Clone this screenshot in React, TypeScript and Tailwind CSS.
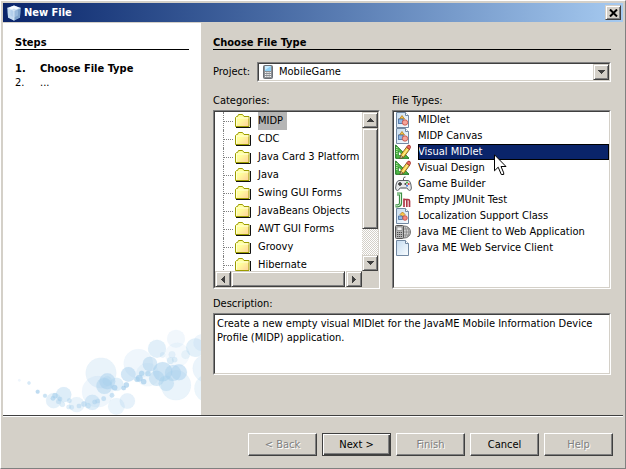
import React, { useState } from "react";

const SUNKEN =
  "border border-t-[#808080] border-l-[#808080] border-r-white border-b-white";
const SUNKEN_INNER =
  "border border-t-[#404040] border-l-[#404040] border-r-[#d4d0c8] border-b-[#d4d0c8]";
const RAISED =
  "border border-t-[#d4d0c8] border-l-[#d4d0c8] border-r-[#404040] border-b-[#404040] bg-[#d4d0c8] shadow-[inset_1px_1px_0_#fff,inset_-1px_-1px_0_#808080]";

type Direction = "up" | "down" | "left" | "right";

const ARROWS: Record<Direction, string> = {
  up: "M4 0h1v1H4zM3 1h3v1H3zM2 2h5v1H2zM1 3h7v1H1z",
  down: "M1 0h7v1H1zM2 1h5v1H2zM3 2h3v1H3zM4 3h1v1H4z",
  left: "M3 1h1v7H3zM2 2h1v5H2zM1 3h1v3H1zM0 4h1v1H0z",
  right: "M0 1h1v7H0zM1 2h1v5H1zM2 3h1v3H2zM3 4h1v1H3z",
};

function Arrow({ dir }: { dir: Direction }) {
  const vertical = dir === "up" || dir === "down";
  return (
    <svg
      width={vertical ? 9 : 4}
      height={vertical ? 4 : 9}
      fill="#404040"
      shapeRendering="crispEdges"
      aria-hidden="true"
    >
      <path d={ARROWS[dir]} />
    </svg>
  );
}

function ScrollButton({ dir }: { dir: Direction }) {
  return (
    <button
      type="button"
      tabIndex={-1}
      aria-label={`Scroll ${dir}`}
      className={`flex size-4 shrink-0 items-center justify-center ${RAISED}`}
    >
      <Arrow dir={dir} />
    </button>
  );
}

function CubeIcon() {
  return (
    <svg width="14" height="16" viewBox="0 0 14 16" aria-hidden="true">
      <path d="M7 .5 13.5 3 13 12.5 7 15.5 1 12.5.5 3z" fill="#8fb4dc" />
      <path d="M7 .5 13.5 3 7 5.5.5 3z" fill="#f4f9ff" />
      <path d="M.5 3 7 5.5v10L1 12.5z" fill="#c3daf0" />
      <path d="M13.5 3 7 5.5v10l6-3z" fill="#7fa3cb" />
      <path d="M7 3.5 11 5.5v5L7 12.500 3.500 10.500v-5z" fill="#a9c8e8" opacity=".6" />
      <path d="M7 5.500v10M.5 3 7 5.500 13.500 3" stroke="#e8f2fc" strokeWidth=".7" fill="none" />
    </svg>
  );
}

function PhoneIcon() {
  return (
    <svg width="10" height="14" viewBox="0 0 10 14" aria-hidden="true">
      <rect x=".5" y=".5" width="9" height="13" rx="1" fill="#8b8f94" stroke="#6b6f75" />
      <rect x="2" y="1" width="6" height="5" fill="#8fd0f5" />
      <path d="M2 1h6L2 5z" fill="#c9ecff" />
      <path d="M2 7.500h6M2 9.500h6M2 11.500h6" stroke="#f4f4f4" strokeDasharray="1.500 .75" />
    </svg>
  );
}

function FolderIcon() {
  return (
    <svg width="16" height="14" viewBox="0 0 16 14" aria-hidden="true">
      <defs>
        <linearGradient id="folder" x1="0" y1="0" x2="1" y2="1">
          <stop offset=".4" stopColor="#ffff9c" />
          <stop offset="1" stopColor="#ffcf9c" />
        </linearGradient>
      </defs>
      <path d="M.5 12.500v-9l1-1h1l1-2h4l1.500 2h5v10z" fill="url(#folder)" stroke="#9c9c00" />
      <path d="M1.500 11.500V4h12" stroke="#ffffd8" fill="none" />
      <path d="M1 13.500h14.500V3" stroke="#111" fill="none" />
    </svg>
  );
}

function Sheet({ children }: { children?: React.ReactNode }) {
  return (
    <svg width="16" height="16" viewBox="0 0 16 16" aria-hidden="true">
      <defs>
        <linearGradient id="sheet" x1="0" y1="0" x2="1" y2="1">
          <stop offset="0" stopColor="#c5dcf1" />
          <stop offset="1" stopColor="#fafdff" />
        </linearGradient>
      </defs>
      <path d="M1.500.5h9l3 3v12h-12z" fill="url(#sheet)" stroke="#7289a3" />
      <path d="M10.500.5v3h3" fill="#fff" stroke="#7289a3" />
      {children}
    </svg>
  );
}

function ClassIcon() {
  return (
    <Sheet>
      <path d="M7 3.500 9.500 7H4.500z" fill="#f9c64d" stroke="#b57a14" strokeWidth=".8" />
      <rect x="3.500" y="7" width="4.500" height="4.500" fill="#8fb8e6" stroke="#44699b" strokeWidth=".8" />
      <circle cx="10" cy="10.500" r="2.700" fill="#f5a49a" stroke="#c4473d" strokeWidth=".8" />
    </Sheet>
  );
}

function LocalizationIcon() {
  return (
    <Sheet>
      <path d="M7.500 4 10 6.500 7.500 9 5 6.500z" fill="#f9c64d" stroke="#b57a14" strokeWidth=".8" />
      <path d="M3.500 8h4v3.500h-4z" fill="#8fb8e6" stroke="#44699b" strokeWidth=".8" />
      <circle cx="10" cy="10" r="2.300" fill="#f28a80" stroke="#c4473d" strokeWidth=".8" />
    </Sheet>
  );
}

function VisualIcon() {
  return (
    <svg width="16" height="16" viewBox="0 0 16 16" aria-hidden="true">
      <path d="M.7 1v13.300H14z" fill="#4fb845" stroke="#16701a" strokeWidth="1" />
      <path d="M3.500 7v4.500H8z" fill="#fff" stroke="#16701a" strokeWidth=".6" />
      <path d="M1 3.500h1.500M1 5.500h1.500M1 7.500h1.500M1 9.500h1.500" stroke="#c8f5ba" strokeWidth=".8" />
      <path d="M5 14.700 6 10.500 11.500 3.200l3 2.300-5.500 7.500z" fill="#f8d24c" stroke="#6b4a12" strokeWidth=".8" />
      <path d="M7.500 12 13 4.700" stroke="#fff0a0" strokeWidth="1" />
      <path d="M11.500 3.200 13 1.200q2.500-.6 2.600 2l-1.100 2.300z" fill="#ee6a5c" stroke="#922018" strokeWidth=".7" />
      <path d="M5 14.700 5.800 11.500 8 13z" fill="#f9e3c0" stroke="#4a3a20" strokeWidth=".6" />
    </svg>
  );
}

function GamepadIcon() {
  return (
    <svg width="17" height="16" viewBox="0 0 17 16" aria-hidden="true">
      <path d="M8.500 5V2.500q0-1.500 2-1.500" stroke="#555" fill="none" />
      <path
        d="M4 4.500h9q2 0 2.800 3.500l.6 4q0 2.500-2 2.500-1 0-2.400-2.500H5Q3.600 14.500 2.600 14.500q-2 0-2-2.500l.6-4Q2 4.500 4 4.500z"
        fill="#e6e8ea"
        stroke="#5f6469"
      />
      <path d="M5 6v4M3 8h4" stroke="#333" strokeWidth="1.400" />
      <circle cx="12" cy="6.500" r="1" fill="#3db83a" />
      <circle cx="12" cy="9.700" r="1" fill="#3a6fd8" />
      <circle cx="10.400" cy="8.100" r="1" fill="#444" />
      <circle cx="13.700" cy="8.100" r="1" fill="#e03a30" />
      <path d="M6 12h5" stroke="#8b9096" />
    </svg>
  );
}

function JUnitIcon() {
  return (
    <svg width="16" height="16" viewBox="0 0 16 16" fill="none" aria-hidden="true">
      <path d="M2 2h3.500v9q0 2.800-3 2.800H.5" stroke="#3c8f45" strokeWidth="3.200" />
      <path d="M2 2h3.500v9q0 2.800-3 2.800H1" stroke="#d6f2d6" strokeWidth="1" />
      <path d="M9 15V6.500M9 7.500h4q1.500 0 1.500 1.500v6M11.800 8v7" stroke="#b03848" strokeWidth="1.700" />
    </svg>
  );
}

function WebClientIcon() {
  return (
    <svg width="16" height="16" viewBox="0 0 16 16" aria-hidden="true">
      <circle cx="9.500" cy="8" r="6" fill="#d3d3d3" stroke="#707070" />
      <path d="M9.500 2q4 6 0 12M12 3q4 5 0 10M4 5h11M4 8h11.500M4 11h11" stroke="#858585" fill="none" strokeWidth=".8" />
      <rect x=".5" y="1.500" width="8" height="13" rx="1" fill="#b5b5b5" stroke="#555" />
      <rect x="2" y="3" width="5" height="3.500" fill="#f1f1f1" stroke="#707070" strokeWidth=".6" />
      <path d="M2 8.500h5M2 10.500h5M2 12.500h5" stroke="#4c4c4c" strokeDasharray="1.200 .7" />
    </svg>
  );
}

function Pointer() {
  return (
    <svg
      width="13"
      height="22"
      viewBox="0 0 13 22"
      className="absolute top-[10px] left-[76px] z-10"
      aria-hidden="true"
    >
      <path
        d="M.5.8v16l3.700-3.600 3.100 7.300h2.400v-1.700L7 12.500h5z"
        fill="#fff"
        stroke="#000"
        strokeWidth="1"
      />
    </svg>
  );
}

const BUBBLES: [number, number, number, number][] = [
  [303, 158, 46, 0.28], [293, 214, 47, 0.2], [415, 130, 44, 0.2], [443, 163, 35, 0.16],
  [528, 195, 45, 0.26], [528, 55, 27, 0.18], [471, 85, 27, 0.38], [586, 82, 28, 0.35],
  [605, 67, 25, 0.2], [620, 144, 42, 0.25], [625, 204, 42, 0.24], [532, 103, 36, 0.14],
  [161, 241, 23, 0.34], [191, 223, 23, 0.42], [230, 253, 23, 0.28], [277, 246, 23, 0.42],
  [349, 258, 25, 0.26], [382, 242, 23, 0.32], [322, 183, 24, 0.55], [313, 197, 24, 0.5],
  [322, 182, 14, 0.35], [350, 192, 20, 0.38], [385, 162, 22, 0.55], [450, 131, 22, 0.5],
  [488, 154, 29, 0.6], [470, 174, 23, 0.5], [499, 189, 23, 0.45], [519, 158, 24, 0.5],
  [537, 156, 24, 0.55], [516, 103, 10, 0.25], [557, 103, 13, 0.22], [488, 104, 8, 0.25],
  [511, 121, 10, 0.35], [524, 118, 8, 0.35],
  [58, 180, 4, 0.2], [87, 188, 5, 0.5], [113, 214, 6, 0.8], [135, 226, 6, 0.65],
  [165, 226, 8, 0.65], [159, 234, 7, 0.65], [180, 236, 7, 0.5], [175, 244, 7, 0.5],
  [187, 252, 8, 0.4], [208, 241, 7, 0.5], [206, 260, 7, 0.4], [215, 261, 7, 0.4],
  [237, 257, 7, 0.5], [252, 251, 8, 0.55], [264, 256, 8, 0.45], [284, 245, 7, 0.55],
  [293, 242, 7, 0.5], [311, 235, 7, 0.6], [336, 225, 7, 0.6], [344, 202, 8, 0.8],
  [371, 203, 7, 0.8], [379, 194, 8, 0.8], [411, 177, 8, 0.75], [418, 174, 10, 0.8],
  [425, 159, 8, 0.75], [431, 184, 8, 0.8], [444, 160, 8, 0.7],
];

function Bubbles() {
  return (
    <svg viewBox="9 20 594 264" className="mt-auto block w-full" aria-hidden="true">
      {BUBBLES.map(([cx, cy, r, o], i) => (
        <circle key={i} cx={cx} cy={cy} r={r} fill="#a6cfec" fillOpacity={o * 0.9} stroke="#9fcbea" strokeOpacity={o * 0.4} />
      ))}
    </svg>
  );
}

const CATEGORIES = [
  "MIDP", "CDC", "Java Card 3 Platform", "Java", "Swing GUI Forms",
  "JavaBeans Objects", "AWT GUI Forms", "Groovy", "Hibernate",
];

const FILE_TYPES = [
  { name: "MIDlet", Icon: ClassIcon },
  { name: "MIDP Canvas", Icon: ClassIcon },
  { name: "Visual MIDlet", Icon: VisualIcon },
  { name: "Visual Design", Icon: VisualIcon },
  { name: "Game Builder", Icon: GamepadIcon },
  { name: "Empty JMUnit Test", Icon: JUnitIcon },
  { name: "Localization Support Class", Icon: LocalizationIcon },
  { name: "Java ME Client to Web Application", Icon: WebClientIcon },
  { name: "Java ME Web Service Client", Icon: Sheet },
];

function CategoryTree() {
  const [selected, setSelected] = useState("MIDP");
  return (
    <div className={`min-h-0 flex-1 ${SUNKEN}`}>
      <div className={`flex h-full flex-col bg-white ${SUNKEN_INNER}`}>
        <div className="flex min-h-0 flex-1">
          <ul role="tree" aria-labelledby="categories" className="min-w-0 flex-1 overflow-hidden pl-2">
            {CATEGORIES.map((name) => (
              <li
                key={name}
                role="treeitem"
                aria-selected={name === selected}
                onClick={() => setSelected(name)}
                className="flex h-[18px] items-center border-l border-dotted border-[#808080]"
              >
                <span className="mr-0.5 w-[9px] shrink-0 border-t border-dotted border-[#808080]" />
                <span className="mr-[7px] shrink-0">
                  <FolderIcon />
                </span>
                <span
                  className={`h-[18px] shrink-0 whitespace-nowrap pr-1 leading-[18px] ${name === selected ? "bg-[#b5b5b5]" : ""}`}
                >
                  {name}
                </span>
              </li>
            ))}
          </ul>
          <div className="flex w-4 flex-col bg-[repeating-conic-gradient(#fff_0_25%,#d4d0c8_0_50%)] bg-size-[2px_2px]">
            <ScrollButton dir="up" />
            <div className={`flex-[101] ${RAISED}`} />
            <div className="flex-[26]" />
            <ScrollButton dir="down" />
          </div>
        </div>
        <div className="flex h-4 shrink-0 bg-[#d4d0c8]">
          <ScrollButton dir="left" />
          <div className={`flex-1 ${RAISED}`} />
          <div className="w-px bg-white" />
          <ScrollButton dir="right" />
          <div className="w-4" />
        </div>
      </div>
    </div>
  );
}

function FileTypeList() {
  const [selected, setSelected] = useState("Visual MIDlet");
  return (
    <div className={`min-h-0 flex-1 ${SUNKEN}`}>
      <ul role="listbox" aria-labelledby="file-types" className={`h-full bg-white ${SUNKEN_INNER}`}>
        {FILE_TYPES.map(({ name, Icon }) => {
          const active = name === selected;
          return (
            <li
              key={name}
              role="option"
              aria-selected={active}
              onClick={() => setSelected(name)}
              className="flex h-4 items-center"
            >
              <span className="w-6 shrink-0 pl-px">
                <Icon />
              </span>
              <span
                className={`relative h-4 flex-1 whitespace-nowrap leading-4 ${active ? "bg-[#0a246a] text-white outline-1 -outline-offset-1 outline-black" : ""}`}
              >
                {name}
                {active && <Pointer />}
              </span>
            </li>
          );
        })}
      </ul>
    </div>
  );
}

const ACTIONS = [
  { label: "< Back", enabled: false },
  { label: "Next >", enabled: true, primary: true },
  { label: "Finish", enabled: false },
  { label: "Cancel", enabled: true },
  { label: "Help", enabled: false },
];

export default function App() {
  return (
    <div className="flex h-screen flex-col border border-t-white border-r-[#808080] border-b-[#808080] border-l-white bg-[#d4d0c8] p-0.5 font-['DejaVu_Sans_Condensed','DejaVu_Sans',sans-serif] text-[11px] leading-[14px] text-black">
      <header className="flex h-[19px] shrink-0 items-center bg-linear-to-r from-[#0a246a] to-[#a6caf0] pr-0.5 pl-1">
        <CubeIcon />
        <h1 className="ml-[3px] flex-1 font-bold text-white">New File</h1>
        <button type="button" aria-label="Close" className={`flex h-[15px] w-4 items-center justify-center ${RAISED}`}>
          <svg width="9" height="8" viewBox="0 0 9 8" className="shrink-0" aria-hidden="true">
            <path d="M1 .5 8 7.500M8 .5 1 7.500" stroke="#000" strokeWidth="2" />
          </svg>
        </button>
      </header>

      <main className="mt-px flex min-h-0 flex-1">
        <section className="flex w-[198px] shrink-0 flex-col bg-white">
          <h2 className="mx-3 mt-3.5 border-b border-black font-bold leading-3">Steps</h2>
          <ol className="mx-3 mt-3">
            <li className="flex font-bold">
              <span className="w-[25px]">1.</span>Choose File Type
            </li>
            <li className="flex">
              <span className="w-[25px]">2.</span>...
            </li>
          </ol>
          <Bubbles />
        </section>

        <section className="flex min-w-0 flex-1 flex-col px-3 pt-3.5">
          <h2 className="border-b border-black font-bold leading-3">Choose File Type</h2>

          <div className="mt-3 flex items-center">
            <label htmlFor="project" className="w-11 shrink-0">
              Project:
            </label>
            <div className={`relative flex-1 ${SUNKEN}`}>
              <div className={`flex h-[18px] items-center bg-white ${SUNKEN_INNER}`}>
                <span className="pointer-events-none absolute left-[5px]">
                  <PhoneIcon />
                </span>
                <select id="project" className="h-4 min-w-0 flex-1 appearance-none bg-transparent pl-5 leading-4 outline-none">
                  <option>MobileGame</option>
                </select>
                <span className={`pointer-events-none flex size-4 shrink-0 items-center justify-center ${RAISED}`}>
                  <Arrow dir="down" />
                </span>
              </div>
            </div>
          </div>

          <div className="mt-3 flex min-h-40 flex-1 gap-3">
            <div className="flex min-w-0 flex-[167] flex-col">
              <h3 id="categories" className="mb-0.5">Categories:</h3>
              <CategoryTree />
            </div>
            <div className="flex min-w-0 flex-[219] flex-col">
              <h3 id="file-types" className="mb-0.5">File Types:</h3>
              <FileTypeList />
            </div>
          </div>

          <label htmlFor="description" className="mt-2 mb-0.5">
            Description:
          </label>
          <div className={`mb-10 ${SUNKEN}`}>
            <textarea
              id="description"
              readOnly
              rows={4}
              className={`block w-full resize-none overflow-hidden bg-white px-0.5 pt-0.5 leading-[14px] outline-none ${SUNKEN_INNER}`}
              value="Create a new empty visual MIDlet for the JavaME Mobile Information Device Profile (MIDP) application."
            />
          </div>
        </section>
      </main>

      <footer className="flex shrink-0 justify-end gap-[5px] border-t border-[#404040] pt-[17px] pr-2.5 pb-2.5 shadow-[inset_0_1px_0_#fff]">
        {ACTIONS.map(({ label, enabled, primary }) => (
          <button
            key={label}
            type="button"
            disabled={!enabled}
            className={`h-[23px] w-[69px] border border-r-[#404040] border-b-[#404040] disabled:text-[#808080] disabled:[text-shadow:1px_1px_0_#fff] ${
              primary
                ? "border-t-[#404040] border-l-[#404040] shadow-[inset_1px_1px_0_#fff,inset_-1px_-1px_0_#404040,inset_-2px_-2px_0_#808080]"
                : "border-t-white border-l-white shadow-[inset_-1px_-1px_0_#808080]"
            }`}
          >
            {label}
          </button>
        ))}
      </footer>
    </div>
  );
}
